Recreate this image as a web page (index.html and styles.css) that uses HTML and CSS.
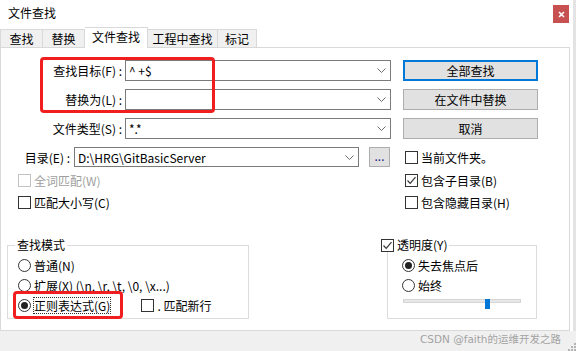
FILE: index.html
```html
<!DOCTYPE html>
<html>
<head>
  <title>文件查找</title>
  <meta charset="utf-8">
  <link rel="stylesheet" href="styles.css">
</head>
<body>
  <div class="window">
    <div class="titlebar">
      <span class="title">文件查找</span>
      <button class="close">
        <svg width="7" height="7" viewBox="0 0 7 7"><path d="M1 1L6 6M6 1L1 6" stroke="#fff" stroke-width="1.6"/></svg>
      </button>
    </div>

    <div class="tabs">
      <div class="tab t-find">查找</div>
      <div class="tab t-replace">替换</div>
      <div class="tab t-files active">文件查找</div>
      <div class="tab t-project">工程中查找</div>
      <div class="tab t-mark">标记</div>
    </div>

    <div class="panel">
      <div class="row">
        <label class="lbl">查找目标(F) :</label>
        <div class="combo"><span>^ +$</span><svg class="chev" width="9" height="5" viewBox="0 0 9 5"><path d="M0.5 0.5L4.5 4.5L8.5 0.5" fill="none" stroke="#6d6d6d"/></svg></div>
        <button class="btn default">全部查找</button>
      </div>
      <div class="row">
        <label class="lbl">替换为(L) :</label>
        <div class="combo"><span></span><svg class="chev" width="9" height="5" viewBox="0 0 9 5"><path d="M0.5 0.5L4.5 4.5L8.5 0.5" fill="none" stroke="#6d6d6d"/></svg></div>
        <button class="btn">在文件中替换</button>
      </div>
      <div class="row">
        <label class="lbl">文件类型(S) :</label>
        <div class="combo"><span>*.*</span><svg class="chev" width="9" height="5" viewBox="0 0 9 5"><path d="M0.5 0.5L4.5 4.5L8.5 0.5" fill="none" stroke="#6d6d6d"/></svg></div>
        <button class="btn">取消</button>
      </div>
      <div class="row dir">
        <label class="lbl short">目录(E) :</label>
        <div class="combo wide"><span>D:\HRG\GitBasicServer</span><svg class="chev" width="9" height="5" viewBox="0 0 9 5"><path d="M0.5 0.5L4.5 4.5L8.5 0.5" fill="none" stroke="#6d6d6d"/></svg></div>
        <button class="browse">...</button>
        <div class="chk cur"><span class="box"></span>当前文件夹。</div>
      </div>

      <div class="opts">
        <div class="opts-col left">
          <div class="chk off"><span class="box"></span>全词匹配(W)</div>
          <div class="chk"><span class="box"></span>匹配大小写(C)</div>
        </div>
        <div class="opts-col">
          <div class="chk"><span class="box"><svg width="11" height="11" viewBox="0 0 11 11"><path d="M1.5 5.5L4.2 8.3L9.5 2.2" fill="none" stroke="#333" stroke-width="1.2"/></svg></span>包含子目录(B)</div>
          <div class="chk"><span class="box"></span>包含隐藏目录(H)</div>
        </div>
      </div>

      <div class="groups">
        <fieldset class="group mode">
          <legend>查找模式</legend>
          <div class="opt-row"><span class="radio"></span>普通(N)</div>
          <div class="opt-row"><span class="radio"></span>扩展(X) (\n, \r, \t, \0, \x...)</div>
          <div class="opt-row">
            <span class="radio on"></span><span class="focus">正则表达式(G)</span>
            <div class="chk newline"><span class="box"></span>. 匹配新行</div>
          </div>
        </fieldset>

        <fieldset class="group alpha">
          <legend><div class="chk"><span class="box"><svg width="11" height="11" viewBox="0 0 11 11"><path d="M1.5 5.5L4.2 8.3L9.5 2.2" fill="none" stroke="#333" stroke-width="1.2"/></svg></span>透明度(Y)</div></legend>
          <div class="opt-row"><span class="radio on"></span>失去焦点后</div>
          <div class="opt-row"><span class="radio"></span>始终</div>
          <div class="slider">
            <div class="track"></div>
            <div class="thumb"></div>
          </div>
        </fieldset>
      </div>

      <div class="hl hl-top"></div>
      <div class="hl hl-regex"></div>
    </div>

    <div class="footer">
      <span class="watermark">CSDN @faith的运维开发之路</span>
      <svg class="grip" width="8" height="8" viewBox="0 0 8 8" fill="#b5b5b5">
        <rect x="6" y="0" width="2" height="2"/>
        <rect x="3" y="3" width="2" height="2"/><rect x="6" y="3" width="2" height="2"/>
        <rect x="0" y="6" width="2" height="2"/><rect x="3" y="6" width="2" height="2"/><rect x="6" y="6" width="2" height="2"/>
      </svg>
    </div>
  </div>
</body>
</html>
```

FILE: styles.css
```css
body {
    margin: 0;
    font-family: "Noto Sans CJK SC", "Noto Sans", sans-serif;
    font-size: 12px;
    color: #000;
    background: #fff;
}

.window {
    width: 576px;
    height: 351px;
    display: flex;
    flex-direction: column;
    background: #fff;
    box-shadow: inset -3px 0 #e3e3e3;
}

/* title bar */
.titlebar {
    height: 27px;
    display: flex;
    justify-content: space-between;
    align-items: flex-start;
    padding-left: 8px;
    flex-shrink: 0;
}

.title {
    line-height: 14px;
    margin-top: 6px;
}

.close {
    width: 16px;
    height: 18px;
    margin-top: 5px;
    margin-right: 7px;
    padding: 0;
    border: none;
    background: #c75050;
    display: flex;
    align-items: center;
    justify-content: center;
}

/* tabs */
.tabs {
    height: 20px;
    display: flex;
    align-items: flex-end;
    flex-shrink: 0;
}

.tab {
    height: 18px;
    box-sizing: border-box;
    border: 1px solid #d9d9d9;
    border-left: none;
    border-bottom: none;
    background: #f0f0f0;
    text-align: center;
    line-height: 18px;
}

.tab:first-child {
    border-left: 1px solid #d9d9d9;
}

.tab.active {
    height: 21px;
    margin-bottom: -1px;
    background: #fff;
    line-height: 18px;
    position: relative;
    z-index: 1;
}

.t-find { width: 43px; }
.t-replace { width: 42px; }
.t-files { width: 63px; }
.t-project { width: 70px; }
.t-mark { width: 39px; }

/* main panel */
.panel {
    width: 570px;
    height: 284px;
    box-sizing: border-box;
    border: 1px solid #d9d9d9;
    padding-top: 12px;
    position: relative;
    flex-shrink: 0;
}

.row {
    display: flex;
    align-items: center;
    height: 21px;
    margin-bottom: 8px;
}

.row.dir {
    height: 20px;
    margin-top: 1px;
    margin-bottom: 0;
}

.lbl {
    width: 121px;
    margin-right: 3px;
    text-align: right;
    white-space: nowrap;
}

.lbl.short {
    width: 69px;
    margin-right: 4px;
}

.combo {
    width: 266px;
    height: 21px;
    box-sizing: border-box;
    border: 1px solid #7a7a7a;
    padding: 0 4px 0 3px;
    display: flex;
    align-items: center;
    justify-content: space-between;
    white-space: nowrap;
}

.combo.wide {
    width: 285px;
    height: 20px;
}

.btn {
    width: 135px;
    height: 21px;
    margin-left: 12px;
    box-sizing: border-box;
    padding: 0;
    border: 1px solid #adadad;
    background: #e1e1e1;
    font: inherit;
    color: #000;
}

.btn.default {
    border: 2px solid #0078d7;
}

.browse {
    width: 21px;
    height: 20px;
    margin-left: 10px;
    box-sizing: border-box;
    padding: 0 0 3px;
    border: 1px solid #adadad;
    background: #e1e1e1;
    font: inherit;
    color: #1c1c80;
    line-height: 14px;
}

/* checkboxes and radios */
.chk {
    display: flex;
    align-items: center;
    height: 17px;
    white-space: nowrap;
}

.box {
    width: 13px;
    height: 13px;
    box-sizing: border-box;
    border: 1px solid #333;
    background: #fff;
    margin-right: 3px;
    display: flex;
    align-items: center;
    justify-content: center;
    flex-shrink: 0;
}

.chk.off {
    color: #a0a0a0;
}

.chk.off .box {
    border-color: #c2c2c2;
}

.chk.cur {
    margin-left: 15px;
}

.opts {
    display: flex;
    margin-top: 5px;
}

.opts-col {
    display: flex;
    flex-direction: column;
    gap: 5px;
}

.opts-col.left {
    margin-left: 17px;
    width: 387px;
}

.groups {
    display: flex;
    margin-top: 27px;
    margin-left: 6px;
}

.group {
    margin: 0;
    padding: 3px 0 0 10px;
    border: 1px solid #dcdcdc;
    box-sizing: border-box;
}

.group legend {
    padding: 0 2px;
    margin-left: -3px;
    line-height: 14px;
}

.group.mode {
    width: 242px;
}

.group.alpha {
    width: 150px;
    margin-left: 138px;
    padding-left: 14px;
}

.group.alpha legend {
    margin-left: -21px;
    padding: 0 2px 0 0;
}

.group.alpha legend .chk {
    height: 14px;
}

.opt-row {
    display: flex;
    align-items: center;
    height: 20px;
    white-space: nowrap;
}

.radio {
    width: 13px;
    height: 13px;
    box-sizing: border-box;
    border: 1px solid #333;
    border-radius: 50%;
    margin-right: 3px;
    display: flex;
    align-items: center;
    justify-content: center;
    flex-shrink: 0;
}

.radio.on::after {
    content: "";
    width: 7px;
    height: 7px;
    border-radius: 50%;
    background: #222;
}

.focus {
    outline: 1px dotted #333;
    line-height: 15px;
}

.chk.newline {
    margin-left: 31px;
}

.slider {
    position: relative;
    width: 118px;
    height: 10px;
    margin-left: 1px;
    margin-bottom: 9px;
}

.track {
    margin-top: 4px;
    height: 4px;
    box-sizing: border-box;
    border: 1px solid #d6d6d6;
    background: #e7e7e7;
}

.thumb {
    position: absolute;
    left: 82px;
    top: 0;
    width: 5px;
    height: 10px;
    background: #0078d7;
}

/* red annotation boxes */
.hl {
    position: absolute;
    box-sizing: border-box;
    border: 3px solid #f01e1e;
    border-radius: 4px;
}

.hl-top {
    left: 39px;
    top: 9px;
    width: 175px;
    height: 56px;
}

.hl-regex {
    left: 12px;
    top: 243px;
    width: 110px;
    height: 28px;
}

/* bottom strip */
.footer {
    flex: 1;
    background: #f0f0f0;
    display: flex;
    justify-content: flex-end;
    align-items: flex-start;
}

.watermark {
    font-family: "DejaVu Sans", "Noto Sans CJK SC", sans-serif;
    color: #a3a3a3;
    font-size: 10.5px;
    line-height: 14px;
    margin-top: 1px;
    margin-right: 7px;
}

.grip {
    align-self: flex-end;
}
```
